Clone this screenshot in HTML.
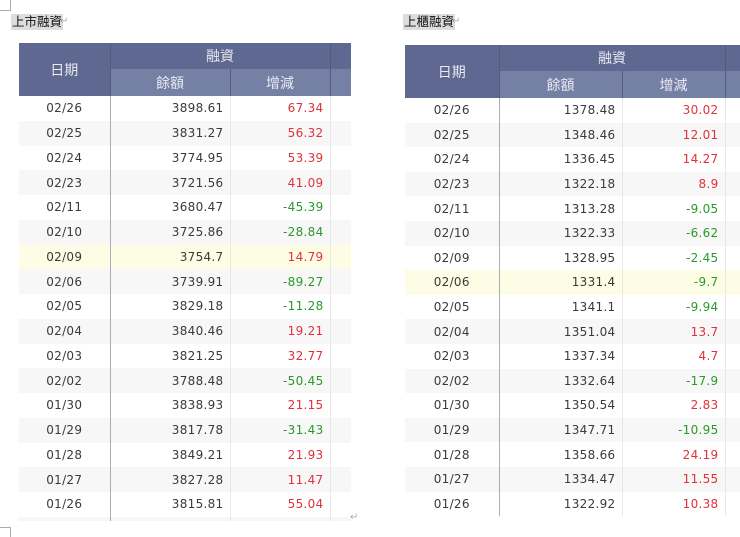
<!DOCTYPE html>
<html><head><meta charset="utf-8"><style>
*{margin:0;padding:0;box-sizing:border-box}
body{width:740px;height:537px;background:#fff;position:relative;overflow:hidden;font-family:"DejaVu Sans","Liberation Sans","Noto Sans CJK TC",sans-serif;color:#3a3a3a}
.cap{position:absolute;top:14px;font-family:"Liberation Sans","Noto Sans CJK TC",sans-serif;font-size:12.5px;background:#ddd;color:#111;line-height:16px;padding:0 1px}
.ret{position:absolute;font-size:10px;color:#aaa}
.t{position:absolute;overflow:hidden}
table{border-collapse:collapse;font-size:12px;table-layout:fixed}
th{color:#e8eaf2;font-weight:normal;font-family:"Noto Sans CJK TC",sans-serif;font-size:14px}
th.a{background:#5f6890}
th.b{background:#7580a5}
th{border-right:1px solid #525b80}
td{text-align:right;padding-right:6px;border-right:1px solid #e8e8e8;letter-spacing:.3px}
td:first-child{text-align:center;padding:0;border-right:1px solid #a9adb5}
tr.o td{background:#f7f7f7}
tr.h td{background:#fdfde6}
.r{color:#e0323a}.g{color:#2a9a2a}
</style></head><body>
<div style="position:absolute;left:0;top:0;width:11px;height:11px;border-right:1px solid #aaa;border-bottom:1px solid #aaa"></div>
<div style="position:absolute;left:0;top:527px;width:11px;height:10px;border-right:1px solid #aaa;border-top:1px solid #aaa"></div>
<div class="cap" style="left:11px">上市融資</div><div class="ret" style="left:60px;top:16px">↵</div>
<div class="cap" style="left:403px">上櫃融資</div><div class="ret" style="left:452px;top:16px">↵</div>
<div class="ret" style="left:350px;top:512px">↵</div>

<div class="t" style="left:19px;top:43px;width:332px;height:478px">
<table style="width:360px">
<colgroup><col style="width:91px"><col style="width:120px"><col style="width:100px"><col style="width:49px"></colgroup>
<tr style="height:26px"><th class="a" rowspan="2">日期</th><th class="a" colspan="2">融資</th><th class="a"></th></tr>
<tr style="height:27px"><th class="b">餘額</th><th class="b">增減</th><th class="b"></th></tr>
<tr style="height:24.75px"><td>02/26</td><td>3898.61</td><td class="r">67.34</td><td></td></tr>
<tr class="o" style="height:24.75px"><td>02/25</td><td>3831.27</td><td class="r">56.32</td><td></td></tr>
<tr style="height:24.75px"><td>02/24</td><td>3774.95</td><td class="r">53.39</td><td></td></tr>
<tr class="o" style="height:24.75px"><td>02/23</td><td>3721.56</td><td class="r">41.09</td><td></td></tr>
<tr style="height:24.75px"><td>02/11</td><td>3680.47</td><td class="g">-45.39</td><td></td></tr>
<tr class="o" style="height:24.75px"><td>02/10</td><td>3725.86</td><td class="g">-28.84</td><td></td></tr>
<tr class="h" style="height:24.75px"><td>02/09</td><td>3754.7</td><td class="r">14.79</td><td></td></tr>
<tr class="o" style="height:24.75px"><td>02/06</td><td>3739.91</td><td class="g">-89.27</td><td></td></tr>
<tr style="height:24.75px"><td>02/05</td><td>3829.18</td><td class="g">-11.28</td><td></td></tr>
<tr class="o" style="height:24.75px"><td>02/04</td><td>3840.46</td><td class="r">19.21</td><td></td></tr>
<tr style="height:24.75px"><td>02/03</td><td>3821.25</td><td class="r">32.77</td><td></td></tr>
<tr class="o" style="height:24.75px"><td>02/02</td><td>3788.48</td><td class="g">-50.45</td><td></td></tr>
<tr style="height:24.75px"><td>01/30</td><td>3838.93</td><td class="r">21.15</td><td></td></tr>
<tr class="o" style="height:24.75px"><td>01/29</td><td>3817.78</td><td class="g">-31.43</td><td></td></tr>
<tr style="height:24.75px"><td>01/28</td><td>3849.21</td><td class="r">21.93</td><td></td></tr>
<tr class="o" style="height:24.75px"><td>01/27</td><td>3827.28</td><td class="r">11.47</td><td></td></tr>
<tr style="height:24.75px"><td>01/26</td><td>3815.81</td><td class="r">55.04</td><td></td></tr>
<tr class="o" style="height:24.75px"><td></td><td></td><td></td><td></td></tr>
</table></div>

<div class="t" style="left:405px;top:45px;width:335px;height:472px">
<table style="width:360px">
<colgroup><col style="width:94px"><col style="width:123px"><col style="width:103px"><col style="width:40px"></colgroup>
<tr style="height:26px"><th class="a" rowspan="2">日期</th><th class="a" colspan="2">融資</th><th class="a"></th></tr>
<tr style="height:27px"><th class="b">餘額</th><th class="b">增減</th><th class="b"></th></tr>
<tr style="height:24.6px"><td>02/26</td><td>1378.48</td><td class="r">30.02</td><td></td></tr>
<tr class="o" style="height:24.6px"><td>02/25</td><td>1348.46</td><td class="r">12.01</td><td></td></tr>
<tr style="height:24.6px"><td>02/24</td><td>1336.45</td><td class="r">14.27</td><td></td></tr>
<tr class="o" style="height:24.6px"><td>02/23</td><td>1322.18</td><td class="r">8.9</td><td></td></tr>
<tr style="height:24.6px"><td>02/11</td><td>1313.28</td><td class="g">-9.05</td><td></td></tr>
<tr class="o" style="height:24.6px"><td>02/10</td><td>1322.33</td><td class="g">-6.62</td><td></td></tr>
<tr style="height:24.6px"><td>02/09</td><td>1328.95</td><td class="g">-2.45</td><td></td></tr>
<tr class="h" style="height:24.6px"><td>02/06</td><td>1331.4</td><td class="g">-9.7</td><td></td></tr>
<tr style="height:24.6px"><td>02/05</td><td>1341.1</td><td class="g">-9.94</td><td></td></tr>
<tr class="o" style="height:24.6px"><td>02/04</td><td>1351.04</td><td class="r">13.7</td><td></td></tr>
<tr style="height:24.6px"><td>02/03</td><td>1337.34</td><td class="r">4.7</td><td></td></tr>
<tr class="o" style="height:24.6px"><td>02/02</td><td>1332.64</td><td class="g">-17.9</td><td></td></tr>
<tr style="height:24.6px"><td>01/30</td><td>1350.54</td><td class="r">2.83</td><td></td></tr>
<tr class="o" style="height:24.6px"><td>01/29</td><td>1347.71</td><td class="g">-10.95</td><td></td></tr>
<tr style="height:24.6px"><td>01/28</td><td>1358.66</td><td class="r">24.19</td><td></td></tr>
<tr class="o" style="height:24.6px"><td>01/27</td><td>1334.47</td><td class="r">11.55</td><td></td></tr>
<tr style="height:24.6px"><td>01/26</td><td>1322.92</td><td class="r">10.38</td><td></td></tr>
</table></div>
</body></html>
